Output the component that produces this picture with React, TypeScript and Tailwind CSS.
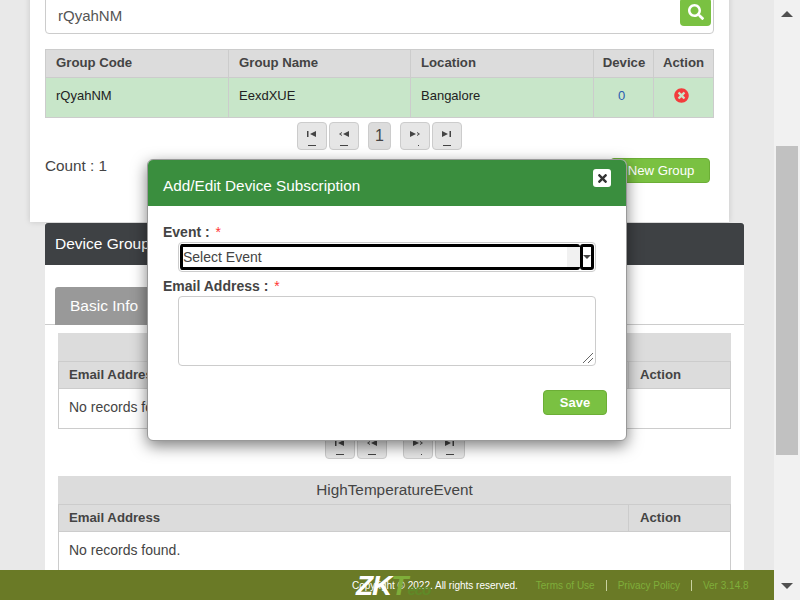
import { FaSearch, FaTimes, FaTimesCircle } from "react-icons/fa";

type PagerKind = "first" | "prev" | "next" | "last";

function PagerGlyph({ kind }: { kind: PagerKind }) {
  const shapes: Record<PagerKind, React.ReactNode> = {
    first: (
      <>
        <rect x="1" y="1" width="1.5" height="6" />
        <path d="M10 1v6L4 4z" />
      </>
    ),
    prev: (
      <>
        <path d="M4 2L1 4l3 2v-1L2.5 4 4 3z" />
        <path d="M11 1v6L5 4z" />
      </>
    ),
    next: (
      <>
        <path d="M1 1v6l6-3z" />
        <path d="M8 2l3 2-3 2V5l1.5-1L8 3z" />
      </>
    ),
    last: (
      <>
        <path d="M1 1v6l6-3z" />
        <rect x="8.5" y="1" width="1.5" height="6" />
      </>
    ),
  };
  return (
    <svg width="12" height="8" viewBox="0 0 12 8" fill="#444">
      {shapes[kind]}
    </svg>
  );
}

function PagerButton({ kind }: { kind: PagerKind }) {
  return (
    <button className="relative flex h-[28px] w-[30px] justify-center rounded-[4px] border border-[#ccc] bg-[#e6e6e6] pt-[7px]">
      <PagerGlyph kind={kind} />
      {kind === "next" ? (
        <span className="absolute bottom-[3px] left-[17px] h-px w-px bg-[#444]" />
      ) : (
        <span className="absolute bottom-[3px] left-[10px] h-px w-[8px] bg-[#444]" />
      )}
    </button>
  );
}

function Pager({ showPage, gap }: { showPage: boolean; gap: string }) {
  return (
    <div className={`flex justify-center ${gap}`}>
      <div className="flex gap-[2px]">
        <PagerButton kind="first" />
        <PagerButton kind="prev" />
      </div>
      {showPage && (
        <span className="flex h-[28px] w-[23px] items-center justify-center rounded-[4px] border border-[#ccc] bg-[#dcdcdc] text-[16px] text-[#444]">
          1
        </span>
      )}
      <div className="flex gap-[2px]">
        <PagerButton kind="next" />
        <PagerButton kind="last" />
      </div>
    </div>
  );
}

function EventTable({ title, rowClass }: { title: string; rowClass: string }) {
  return (
    <div className="border-x border-[#ccc] text-[14px] text-[#444]">
      <div className="-mx-px flex h-[28px] items-center justify-center bg-[#dcdcdc] text-[15.3px]">{title}</div>
      <div className="flex h-[28px] border-y border-[#ccc] bg-[#dcdcdc] text-[13.2px] font-bold">
        <div className="flex-1 pl-[10px] leading-[26px]">Email Address</div>
        <div className="w-[102px] border-l border-[#ccc] pl-[11px] leading-[26px]">Action</div>
      </div>
      <div className={`bg-white pl-[10px] ${rowClass}`}>No records found.</div>
    </div>
  );
}

export default function App() {
  return (
    <div
      className="relative flex h-[600px] w-[800px] overflow-hidden bg-[#e9e9e9]"
      style={{ fontFamily: '"Liberation Sans", Arial, sans-serif' }}
    >
      <div className="flex w-[774px] flex-col">
        <div className="min-h-0 flex-1 overflow-hidden">
          {/* Search card */}
          <div className="-mt-[6px] ml-[30px] h-[228px] w-[699px] bg-white px-[15px] shadow-[0_0_6px_rgba(0,0,0,0.15)]">
            <div className="flex h-[40px] items-center rounded-[4px] border border-[#ccc] pl-[12px] pr-[2px] text-[15px] text-[#555]">
              <span className="flex-1 pt-[5px]">rQyahNM</span>
              <span className="-mt-[5px] flex h-[28px] w-[31px] items-center justify-center rounded-[4px] bg-[#7ac142] text-[16px] text-white">
                <FaSearch />
              </span>
            </div>

            <table className="mt-[15px] w-[668px] table-fixed border-collapse border border-[#ccc] text-[13.2px]">
              <colgroup>
                <col className="w-[183px]" />
                <col className="w-[182px]" />
                <col className="w-[183px]" />
                <col className="w-[60px]" />
                <col className="w-[60px]" />
              </colgroup>
              <thead>
                <tr className="h-[28px] bg-[#dcdcdc] font-bold text-[#444]">
                  <th className="border border-[#ccc] pb-px pl-[10px] text-left">Group Code</th>
                  <th className="border border-[#ccc] pb-px pl-[10px] text-left">Group Name</th>
                  <th className="border border-[#ccc] pb-px pl-[10px] text-left">Location</th>
                  <th className="border border-[#ccc] pb-px pl-px text-center">Device</th>
                  <th className="border border-[#ccc] pb-px text-center">Action</th>
                </tr>
              </thead>
              <tbody>
                <tr className="h-[40px] bg-[#c8e6c9] text-[13px] text-[#222]">
                  <td className="border border-[#ccc] pb-[3px] pl-[10px]">rQyahNM</td>
                  <td className="border border-[#ccc] pb-[3px] pl-[10px]">EexdXUE</td>
                  <td className="border border-[#ccc] pb-[3px] pl-[10px]">Bangalore</td>
                  <td className="border border-[#ccc] pb-[3px] pr-[4px] text-center text-[#2a5db0]">0</td>
                  <td className="border border-[#ccc] pb-[5px] pr-[5px]">
                    <FaTimesCircle className="mx-auto text-[15px] text-[#f33c3c]" />
                  </td>
                </tr>
              </tbody>
            </table>

            <div className="mt-[4px]">
              <Pager showPage gap="gap-[9px]" />
            </div>

            <div className="mt-[8px] flex items-start justify-between pr-[4px]">
              <span className="text-[15.3px] leading-[15px] text-[#444]">Count : 1</span>
              <button className="h-[25px] w-[100px] rounded-[4px] border border-[#6cae36] bg-[#7ac142] pl-[2px] text-[13.2px] text-white">
                New Group
              </button>
            </div>
          </div>

          {/* Device group card */}
          <div className="ml-[45px] mt-px w-[699px] bg-white">
            <div className="flex h-[42px] items-center rounded-t-[3px] bg-[#3e4144] pl-[10px] text-[15.5px] text-white">
              Device Group
            </div>
            <div className="h-[60px] border-b border-[#ccc] pl-[10px] pt-[22px]">
              <div className="flex h-[38px] w-[100px] items-center rounded-t-[3px] bg-[#999] pl-[15px] text-[15.5px] text-white">
                Basic Info
              </div>
            </div>
            <div className="px-[13px] pt-[8px]">
              <EventTable title="" rowClass="h-[40px] border-b border-[#ccc] leading-[36px]" />
              <div className="mt-[2px]">
                <Pager showPage={false} gap="gap-[16px]" />
              </div>
              <div className="mt-[17px]">
                <EventTable title="HighTemperatureEvent" rowClass="h-[60px] leading-[36px]" />
              </div>
            </div>
          </div>
        </div>

        <footer className="relative z-10 flex h-[30px] shrink-0 items-center whitespace-nowrap bg-[#6a7a26] pl-[352px] text-[10px] text-[#7fae3a]">
          <span className="text-white">Copyright © 2022. All rights reserved.</span>
          <span className="ml-[18px]">Terms of Use</span>
          <span className="mx-[11px] h-[11px] w-px bg-[#c9d2a0]" />
          <span>Privacy Policy</span>
          <span className="mx-[11px] h-[11px] w-px bg-[#c9d2a0]" />
          <span>Ver 3.14.8</span>
          <span className="absolute left-[356px] top-[1px] flex items-baseline text-[28px] font-bold italic leading-[30px] tracking-[-1px] text-white">
            ZK
            <span className="text-[#7fae3a]">T</span>
            <span className="text-[15px] text-[#5f8a28]">eco</span>
          </span>
        </footer>
      </div>

      {/* Scrollbar */}
      <div className="flex w-[26px] flex-col items-center bg-[#f1f1f1]">
        <span className="mt-[11px] h-0 w-0 border-x-[6px] border-b-[6px] border-x-transparent border-b-[#505050]" />
        <div className="mt-[129px] h-[309px] w-[22px] bg-[#c1c1c1]" />
        <span className="mt-[128px] h-0 w-0 border-x-[6px] border-t-[6px] border-x-transparent border-t-[#505050]" />
      </div>

      {/* Modal */}
      <div className="absolute left-[147px] top-[159px] z-20 h-[282px] w-[480px] rounded-[6px] border border-[#999] bg-white shadow-[0_5px_15px_rgba(0,0,0,0.5)]">
        <div className="flex h-[46px] items-start justify-between rounded-t-[5px] bg-[#3a8e3e] pl-[15px] pr-[15px] pt-[9px]">
          <span className="pt-[6px] text-[15.3px] text-white">Add/Edit Device Subscription</span>
          <span className="flex h-[18px] w-[18px] items-center justify-center rounded-[3px] bg-white text-[13px] text-[#333]">
            <FaTimes />
          </span>
        </div>
        <div className="px-[15px] pt-[17px] text-[14px] text-[#444]">
          <label className="block h-[19px] font-bold leading-[19px]">
            Event : <span className="ml-[2px] font-normal text-[#f33]">*</span>
          </label>
          <div className="ml-[15px] h-[30px] w-[418px] rounded-[4px] border border-[#ccc] p-px">
            <div className="flex h-[26px] w-[414px] rounded-[3px]">
              <div className="flex flex-1 items-center rounded-[3px] border-y-[3px] border-l-[3px] border-black text-[14px] text-[#444]">
                <span className="flex-1">Select Event</span>
                <span className="h-full w-[13px] bg-[#f1f1f1]" />
              </div>
              <span className="flex w-[14px] items-center justify-center rounded-[3px] border-[3px] border-black">
                <span className="h-0 w-0 border-x-[4px] border-t-[4px] border-x-transparent border-t-[#444]" />
              </span>
            </div>
          </div>
          <label className="mt-[4px] block h-[20px] font-bold leading-[20px]">
            Email Address : <span className="ml-[2px] font-normal text-[#f33]">*</span>
          </label>
          <div className="relative ml-[15px] h-[70px] w-[418px] rounded-[4px] border border-[#ccc]">
            <svg className="absolute bottom-px right-px" width="12" height="12" viewBox="0 0 12 12" stroke="#666" fill="none">
              <path d="M11 1L1 11M11 6L6 11" />
            </svg>
          </div>
          <div className="mt-[24px] flex justify-end pr-[4px]">
            <button className="h-[25px] w-[64px] rounded-[4px] border border-[#6cae36] bg-[#7ac142] pt-px text-[13px] font-bold text-white">
              Save
            </button>
          </div>
        </div>
      </div>
    </div>
  );
}
